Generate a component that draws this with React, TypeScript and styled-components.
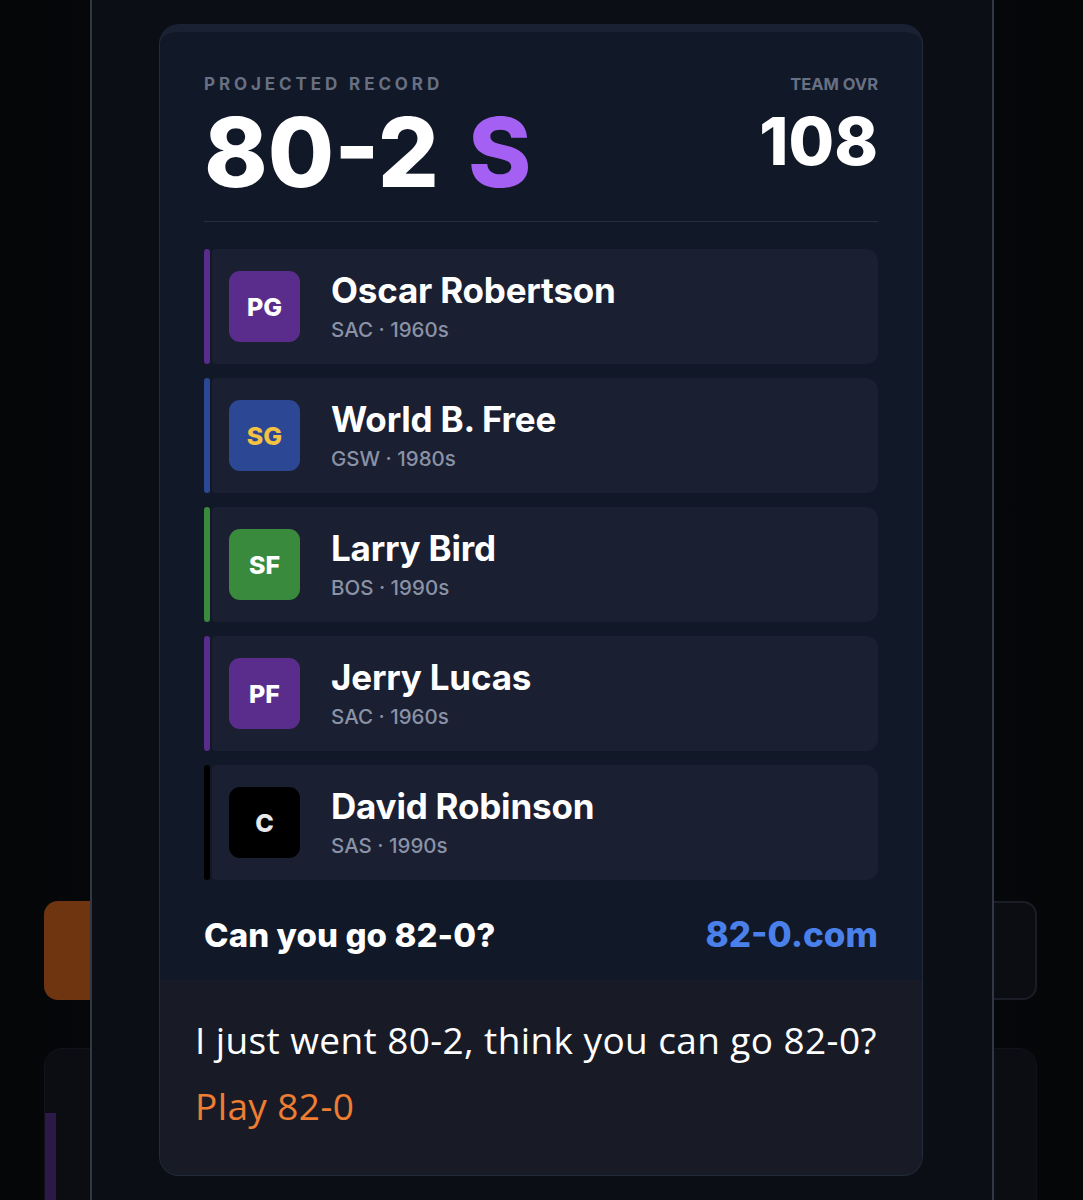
import React from "react";
import styled, { createGlobalStyle } from "styled-components";

const Global = createGlobalStyle`
  html, body {
    margin: 0;
    padding: 0;
    background: #08090d;
  }
  body {
    font-family: Inter, "Noto Sans", sans-serif;
    -webkit-font-smoothing: antialiased;
  }
`;

type Player = {
  pos: string;
  name: string;
  team: string;
  era: string;
  tone: string;
  ink: string;
};

const roster: Player[] = [
  { pos: "PG", name: "Oscar Robertson", team: "SAC", era: "1960s", tone: "#5a2d8d", ink: "#ffffff" },
  { pos: "SG", name: "World B. Free", team: "GSW", era: "1980s", tone: "#2c4894", ink: "#f3c243" },
  { pos: "SF", name: "Larry Bird", team: "BOS", era: "1990s", tone: "#398a3c", ink: "#ffffff" },
  { pos: "PF", name: "Jerry Lucas", team: "SAC", era: "1960s", tone: "#5a2d8d", ink: "#ffffff" },
  { pos: "C", name: "David Robinson", team: "SAS", era: "1990s", tone: "#000000", ink: "#e6e8ec" },
];

/* ---------- page behind the share sheet ---------- */

const Stage = styled.div`
  position: relative;
  width: 1083px;
  height: 1200px;
  overflow: hidden;
  background: linear-gradient(90deg, #050608 0%, #0a0b10 40%, #0a0b10 60%, #050608 100%);
`;

const Backdrop = styled.div`
  display: flex;
  flex-direction: column;
  padding: 901px 46px 0 44px;
  gap: 48px;
`;

const ActionRow = styled.div`
  display: flex;
  gap: 14px;
  height: 99px;
`;

const PrimaryAction = styled.div`
  flex: 1;
  border-radius: 14px;
  background: #6e3510;
`;

const GhostAction = styled.div`
  flex: 1;
  border-radius: 14px;
  background: #0b0d12;
  border: 2px solid #1a1d26;
`;

const BackCard = styled.div`
  display: flex;
  padding-top: 64px;
  height: 240px;
  border-radius: 18px;
  background: #0b0d12;
  border: 1px solid #10131a;
`;

const BackAccent = styled.div`
  width: 11px;
  background: #2c1948;
`;

/* ---------- share sheet ---------- */

const Sheet = styled.div`
  position: absolute;
  top: 0;
  left: 90px;
  width: 904px;
  height: 1200px;
  box-sizing: border-box;
  padding: 24px 67px 0;
  background: #0c0e16;
  border-left: 2px solid #323744;
  border-right: 2px solid #323744;
`;

const Card = styled.article`
  width: 764px;
  box-sizing: border-box;
  border-radius: 20px;
  overflow: hidden;
  border: 1px solid #242b3a;
  border-top: 8px solid #1a2133;
  background: #181b26;
`;

const Preview = styled.section`
  background: #111828;
  padding: 44px 44px 28px;
  display: flex;
  flex-direction: column;
`;

const Header = styled.header`
  display: flex;
  justify-content: space-between;
`;

const Stat = styled.div<{ $end?: boolean }>`
  display: flex;
  flex-direction: column;
  align-items: ${(p) => (p.$end ? "flex-end" : "flex-start")};
`;

const Label = styled.div<{ $spaced?: boolean }>`
  font-size: ${(p) => (p.$spaced ? "17px" : "16.5px")};
  line-height: 1;
  font-weight: 700;
  color: #687083;
  letter-spacing: ${(p) => (p.$spaced ? "3.9px" : "0")};
`;

const Record = styled.div`
  margin-top: 11px;
  font-size: 96px;
  line-height: 1;
  font-weight: 800;
  color: #ffffff;
  white-space: nowrap;
`;

const Tier = styled.span`
  color: #a460f2;
  margin-left: 8px;
`;

const Overall = styled.div`
  margin-top: 15px;
  font-size: 66px;
  line-height: 1;
  font-weight: 800;
  color: #ffffff;
`;

const Divider = styled.hr`
  margin: 21px 0 0;
  border: 0;
  height: 1px;
  background: #262e40;
`;

const List = styled.ul`
  list-style: none;
  margin: 27px 0 0;
  padding: 0;
  display: flex;
  flex-direction: column;
  gap: 14px;
`;

const Row = styled.li`
  display: flex;
  height: 115px;
  gap: 2px;
`;

const Accent = styled.span<{ $tone: string }>`
  width: 6px;
  border-radius: 3px;
  background: ${(p) => p.$tone};
  flex-shrink: 0;
`;

const RowBody = styled.div`
  flex: 1;
  display: flex;
  align-items: center;
  gap: 31px;
  padding-left: 17px;
  background: #1a1f31;
  border-radius: 4px 12px 12px 4px;
`;

const Badge = styled.div<{ $tone: string; $ink: string }>`
  width: 71px;
  height: 71px;
  border-radius: 11px;
  background: ${(p) => p.$tone};
  color: ${(p) => p.$ink};
  display: flex;
  align-items: center;
  justify-content: center;
  font-size: 25px;
  font-weight: 800;
  flex-shrink: 0;
`;

const Info = styled.div`
  display: flex;
  flex-direction: column;
  gap: 12px;
`;

const Name = styled.div`
  font-size: 35px;
  line-height: 1;
  font-weight: 700;
  color: #ffffff;
  letter-spacing: -0.2px;
`;

const Meta = styled.div`
  font-size: 20.5px;
  line-height: 1;
  font-weight: 500;
  color: #8a92a6;
`;

const Footer = styled.footer`
  margin-top: 37px;
  display: flex;
  justify-content: space-between;
  align-items: baseline;
`;

const Tagline = styled.div`
  font-size: 33px;
  line-height: 1;
  font-weight: 800;
  color: #ffffff;
  letter-spacing: 0.1px;
`;

const Site = styled.div`
  font-size: 35px;
  line-height: 1;
  font-weight: 800;
  color: #4a80ea;
`;

const Caption = styled.section`
  padding: 38px 36px 46px 35px;
  font-family: "Open Sans", "Noto Sans", sans-serif;
  background: #181b26;
`;

const Message = styled.p`
  margin: 0;
  font-size: 37px;
  line-height: 1.2;
  font-weight: 500;
  color: #ffffff;
  letter-spacing: 0.4px;
  white-space: nowrap;
`;

const PlayLink = styled.p`
  margin: 22px 0 0;
  font-size: 37px;
  line-height: 1.2;
  color: #ef7d32;
  letter-spacing: 0.4px;
`;

export default function App() {
  return (
    <>
      <Global />
      <Stage>
        <Backdrop>
          <ActionRow>
            <PrimaryAction />
            <GhostAction />
          </ActionRow>
          <BackCard>
            <BackAccent />
          </BackCard>
        </Backdrop>

        <Sheet>
          <Card>
            <Preview>
              <Header>
                <Stat>
                  <Label $spaced>PROJECTED RECORD</Label>
                  <Record>
                    80-2 <Tier>S</Tier>
                  </Record>
                </Stat>
                <Stat $end>
                  <Label>TEAM OVR</Label>
                  <Overall>108</Overall>
                </Stat>
              </Header>
              <Divider />
              <List>
                {roster.map((p) => (
                  <Row key={p.pos}>
                    <Accent $tone={p.tone} />
                    <RowBody>
                      <Badge $tone={p.tone} $ink={p.ink}>
                        {p.pos}
                      </Badge>
                      <Info>
                        <Name>{p.name}</Name>
                        <Meta>
                          {p.team} · {p.era}
                        </Meta>
                      </Info>
                    </RowBody>
                  </Row>
                ))}
              </List>
              <Footer>
                <Tagline>Can you go 82-0?</Tagline>
                <Site>82-0.com</Site>
              </Footer>
            </Preview>
            <Caption>
              <Message>I just went 80-2, think you can go 82-0?</Message>
              <PlayLink>Play 82-0</PlayLink>
            </Caption>
          </Card>
        </Sheet>
      </Stage>
    </>
  );
}
